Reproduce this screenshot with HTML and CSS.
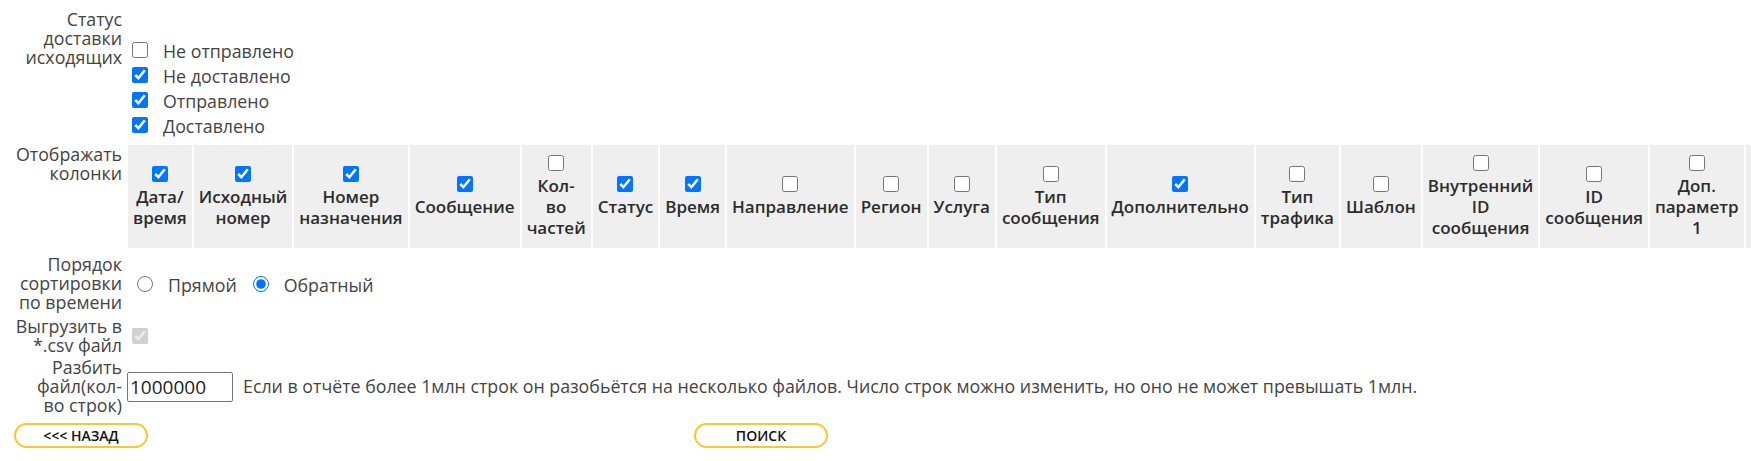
FILE: index.html
```html
<!DOCTYPE html>
<html lang="ru">
<head>
<meta charset="utf-8">
<title>Отчёт</title>
<link rel="stylesheet" href="styles.css">
</head>
<body>
<form class="report">
  <div class="row row-status">
    <div class="lbl">Статус доставки исходящих</div>
    <div class="val checks">
      <label class="opt"><input type="checkbox"><span>Не отправлено</span></label>
      <label class="opt"><input type="checkbox" checked><span>Не доставлено</span></label>
      <label class="opt"><input type="checkbox" checked><span>Отправлено</span></label>
      <label class="opt"><input type="checkbox" checked><span>Доставлено</span></label>
    </div>
  </div>

  <div class="row row-cols">
    <div class="lbl">Отображать колонки</div>
    <div class="val">
      <table class="cols">
        <tr>
          <th><input type="checkbox" checked><span>Дата/<wbr>время</span></th>
          <th><input type="checkbox" checked><span>Исходный номер</span></th>
          <th><input type="checkbox" checked><span>Номер назначения</span></th>
          <th><input type="checkbox" checked><span>Сообщение</span></th>
          <th><input type="checkbox"><span>Кол-<br>во частей</span></th>
          <th><input type="checkbox" checked><span>Статус</span></th>
          <th><input type="checkbox" checked><span>Время</span></th>
          <th><input type="checkbox"><span>Направление</span></th>
          <th><input type="checkbox"><span>Регион</span></th>
          <th><input type="checkbox"><span>Услуга</span></th>
          <th><input type="checkbox"><span>Тип сообщения</span></th>
          <th><input type="checkbox" checked><span>Дополнительно</span></th>
          <th><input type="checkbox"><span>Тип трафика</span></th>
          <th><input type="checkbox"><span>Шаблон</span></th>
          <th><input type="checkbox"><span>Внутренний ID сообщения</span></th>
          <th><input type="checkbox"><span>ID сообщения</span></th>
          <th><input type="checkbox"><span>Доп. параметр 1</span></th>
          <th><input type="checkbox"><span>Доп. параметр 2</span></th>
          <th><input type="checkbox"><span>Доп. параметр 3</span></th>
          <th><input type="checkbox"><span>Доп. параметр 4</span></th>
        </tr>
      </table>
    </div>
  </div>

  <div class="row row-order">
    <div class="lbl">Порядок сортировки по времени</div>
    <div class="val radios">
      <label class="ropt"><input type="radio" name="order"><span>Прямой</span></label>
      <label class="ropt"><input type="radio" name="order" checked><span>Обратный</span></label>
    </div>
  </div>

  <div class="row row-csv">
    <div class="lbl">Выгрузить в *.csv файл</div>
    <div class="val csv"><input type="checkbox" checked disabled></div>
  </div>

  <div class="row row-split">
    <div class="lbl">Разбить файл(кол-<br>во строк)</div>
    <div class="val split">
      <input class="num" type="text" value="1000000">
      <span>Если в отчёте более 1млн строк он разобьётся на несколько файлов. Число строк можно изменить, но оно не может превышать 1млн.</span>
    </div>
  </div>

  <div class="actions">
    <button type="button" class="btn">&lt;&lt;&lt; Назад</button>
    <button type="button" class="btn">Поиск</button>
  </div>
</form>
</body>
</html>
```

FILE: styles.css
```css
html, body {
  overflow: hidden;
}

body {
  margin: 0;
  background: #fff;
  color: #444;
  font-family: "Open Sans", "Noto Sans", sans-serif;
}

.report {
  display: flex;
  flex-direction: column;
  padding: 10px 0 0 8px;
}

.row {
  display: grid;
  grid-template-columns: 114px minmax(0, 1fr);
  column-gap: 6px;
  align-items: start;
}

.lbl {
  text-align: right;
  font-size: 17.8px;
  line-height: 19px;
}

.val {
  min-width: 0;
  font-size: 17.8px;
  line-height: 19px;
}

/* status checkboxes */
.row-status .val {
  padding-top: 27px;
}

.checks {
  display: flex;
  flex-direction: column;
}

.opt {
  display: flex;
  align-items: center;
  height: 25px;
}

.opt input {
  width: 16px;
  height: 16px;
  margin: 0 15px 0 4px;
}

.opt span {
  padding-top: 3px;
}

/* column chooser */
.row-cols {
  margin-top: 8px;
}

.cols {
  border-collapse: separate;
  border-spacing: 2px 0;
  margin-left: -2px;
}

.cols th {
  background: #efefef;
  padding: 10px 5px;
  vertical-align: middle;
  text-align: center;
  font-size: 17px;
  font-weight: 600;
  line-height: 21px;
  color: #2c2c2c;
}

.cols th input {
  display: block;
  width: 16px;
  height: 16px;
  margin: 0 auto 4px;
}

/* sort order */
.row-order {
  margin-top: 7px;
}

.radios {
  display: flex;
  align-self: center;
  gap: 7px;
}

.ropt {
  display: flex;
  align-items: center;
}

.ropt input {
  width: 16px;
  height: 16px;
  margin: 0 15px 0 9px;
}

.ropt span {
  padding-top: 3px;
}

/* csv */
.row-csv {
  margin-top: 5px;
}

.csv {
  align-self: center;
  display: flex;
}

.csv input {
  width: 16px;
  height: 16px;
  margin: 0 0 0 4px;
}

/* split */
.row-split {
  margin-top: 3px;
}

.split {
  align-self: center;
  display: flex;
  align-items: center;
  white-space: nowrap;
}

.num {
  box-sizing: border-box;
  width: 106px;
  height: 30px;
  margin: 0 10px 0 -1px;
  padding: 0 2px;
  border: 1px solid #767676;
  border-radius: 2px;
  font-family: inherit;
  font-size: 19px;
  color: #222;
}

/* buttons */
.actions {
  display: flex;
  gap: 546px;
  margin-top: 8px;
  padding-left: 6px;
}

.btn {
  box-sizing: border-box;
  width: 134px;
  height: 25px;
  padding: 0;
  border: 2px solid #fbc631;
  border-radius: 13px;
  background: #fff;
  color: #111;
  font-family: inherit;
  font-size: 14px;
  font-weight: 600;
  text-transform: uppercase;
  line-height: 19px;
}
```
